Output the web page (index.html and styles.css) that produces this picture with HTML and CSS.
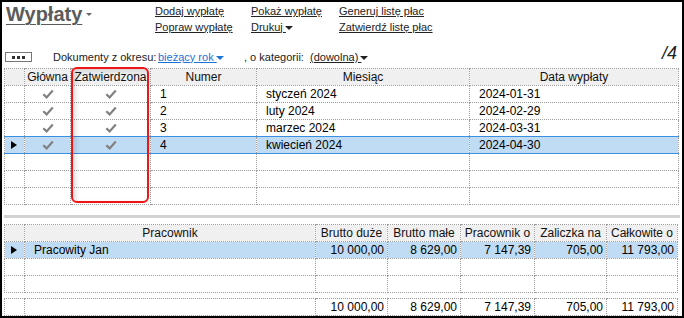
FILE: index.html
```html
<!DOCTYPE html>
<html lang="pl">
  <head>
    <meta charset="utf-8" />
    <meta name="viewport" content="width=device-width, initial-scale=1.0" />
    <title>Wypłaty</title>
    <link rel="stylesheet" href="styles.css">
  </head>

  <body>
    <div class="okno">
      <header class="gora">
        <h1 class="tytul"><span>Wypłaty</span><i class="strzalka szara"></i></h1>
        <nav class="akcje k1">
          <a href="#">Dodaj wypłatę</a>
          <a href="#">Popraw wypłatę</a>
        </nav>
        <nav class="akcje k2">
          <a href="#">Pokaż wypłatę</a>
          <a href="#">Drukuj <i class="strzalka"></i></a>
        </nav>
        <nav class="akcje k3">
          <a href="#">Generuj listę płac</a>
          <a href="#">Zatwierdź listę płac</a>
        </nav>
      </header>

      <div class="filtr">
        <button class="wiecej"><i></i><i></i><i></i></button>
        <span class="etykieta okres">Dokumenty z okresu:</span>
        <a class="wybor niebieski" href="#">bieżący rok <i class="strzalka"></i></a>
        <span class="etykieta kategoria">, o kategorii:</span>
        <a class="wybor" href="#">(dowolna) <i class="strzalka"></i></a>
        <span class="licznik">/4</span>
      </div>

      <!-- lista wypłat -->
      <section class="lista">
        <table class="siatka">
          <colgroup>
            <col style="width: 20px" />
            <col style="width: 46px" />
            <col style="width: 80px" />
            <col style="width: 106px" />
            <col style="width: 213px" />
            <col style="width: 209px" />
          </colgroup>
          <tr>
            <th></th>
            <th>Główna</th>
            <th>Zatwierdzona</th>
            <th>Numer</th>
            <th>Miesiąc</th>
            <th>Data wypłaty</th>
          </tr>
          <tr>
            <td></td>
            <td class="ptak"><svg viewBox="0 0 12 10" width="12" height="10"><path d="M1.3 5.2 L4.6 8.4 L10.8 1.4" /></svg></td>
            <td class="ptak"><svg viewBox="0 0 12 10" width="12" height="10"><path d="M1.3 5.2 L4.6 8.4 L10.8 1.4" /></svg></td>
            <td>1</td>
            <td>styczeń 2024</td>
            <td>2024-01-31</td>
          </tr>
          <tr>
            <td></td>
            <td class="ptak"><svg viewBox="0 0 12 10" width="12" height="10"><path d="M1.3 5.2 L4.6 8.4 L10.8 1.4" /></svg></td>
            <td class="ptak"><svg viewBox="0 0 12 10" width="12" height="10"><path d="M1.3 5.2 L4.6 8.4 L10.8 1.4" /></svg></td>
            <td>2</td>
            <td>luty 2024</td>
            <td>2024-02-29</td>
          </tr>
          <tr>
            <td></td>
            <td class="ptak"><svg viewBox="0 0 12 10" width="12" height="10"><path d="M1.3 5.2 L4.6 8.4 L10.8 1.4" /></svg></td>
            <td class="ptak"><svg viewBox="0 0 12 10" width="12" height="10"><path d="M1.3 5.2 L4.6 8.4 L10.8 1.4" /></svg></td>
            <td>3</td>
            <td>marzec 2024</td>
            <td>2024-03-31</td>
          </tr>
          <tr class="wybrany">
            <td class="znacznik"></td>
            <td class="ptak"><svg viewBox="0 0 12 10" width="12" height="10"><path d="M1.3 5.2 L4.6 8.4 L10.8 1.4" /></svg></td>
            <td class="ptak"><svg viewBox="0 0 12 10" width="12" height="10"><path d="M1.3 5.2 L4.6 8.4 L10.8 1.4" /></svg></td>
            <td>4</td>
            <td>kwiecień 2024</td>
            <td>2024-04-30</td>
          </tr>
          <tr><td></td><td></td><td></td><td></td><td></td><td></td></tr>
          <tr><td></td><td></td><td></td><td></td><td></td><td></td></tr>
          <tr><td></td><td></td><td></td><td></td><td></td><td></td></tr>
        </table>
        <div class="ramka"></div>
      </section>

      <div class="rozdzielacz"></div>

      <!-- pracownicy na liście -->
      <table class="siatka pracownicy">
        <colgroup>
          <col style="width: 20px" />
          <col style="width: 291px" />
          <col style="width: 72px" />
          <col style="width: 73px" />
          <col style="width: 74px" />
          <col style="width: 72px" />
          <col style="width: 71px" />
        </colgroup>
        <tr>
          <th></th>
          <th>Pracownik</th>
          <th>Brutto duże</th>
          <th>Brutto małe</th>
          <th>Pracownik o</th>
          <th>Zaliczka na</th>
          <th>Całkowite o</th>
        </tr>
        <tr class="zaznaczony">
          <td class="znacznik"></td>
          <td>Pracowity Jan</td>
          <td class="kwota">10 000,00</td>
          <td class="kwota">8 629,00</td>
          <td class="kwota">7 147,39</td>
          <td class="kwota">705,00</td>
          <td class="kwota">11 793,00</td>
        </tr>
        <tr><td></td><td></td><td></td><td></td><td></td><td></td><td></td></tr>
        <tr><td></td><td></td><td></td><td></td><td></td><td></td><td></td></tr>
      </table>

      <table class="siatka suma">
        <colgroup>
          <col style="width: 20px" />
          <col style="width: 291px" />
          <col style="width: 72px" />
          <col style="width: 73px" />
          <col style="width: 74px" />
          <col style="width: 72px" />
          <col style="width: 71px" />
        </colgroup>
        <tr>
          <td></td>
          <td></td>
          <td class="kwota">10 000,00</td>
          <td class="kwota">8 629,00</td>
          <td class="kwota">7 147,39</td>
          <td class="kwota">705,00</td>
          <td class="kwota">11 793,00</td>
        </tr>
      </table>
    </div>
  </body>
</html>
```

FILE: styles.css
```css
* {
  box-sizing: border-box;
}

body {
  margin: 0;
  font-family: "Liberation Sans", Arial, sans-serif;
  color: #000;
}

.okno {
  width: 684px;
  height: 318px;
  border: 2px solid #000;
  padding: 0 2px;
  background: #fff;
  overflow: hidden;
}

/* nagłówek z akcjami */
.gora {
  display: flex;
  height: 46px;
  padding-top: 2px;
}

.tytul {
  width: 151px;
  margin: 0;
  padding-left: 2px;
  font-size: 20px;
  line-height: 20px;
  color: #5b5b5b;
}

.tytul span {
  text-decoration: underline;
  text-decoration-thickness: 1px;
  text-underline-offset: 3px;
}

.akcje {
  display: flex;
  flex-direction: column;
  font-size: 11px;
  line-height: 15.5px;
}

.k1 {
  width: 96px;
}

.k2 {
  width: 88px;
}

.akcje a,
.wybor {
  color: #222;
  text-decoration: underline;
}

.strzalka {
  display: inline-block;
  width: 0;
  height: 0;
  margin-left: -1px;
  vertical-align: 1px;
  border-top: 4px solid #222;
  border-left: 4px solid transparent;
  border-right: 4px solid transparent;
}

.strzalka.szara {
  margin-left: 4px;
  vertical-align: 5px;
  border-top-color: #666;
  border-top-width: 3px;
  border-left-width: 3px;
  border-right-width: 3px;
}

/* filtr */
.filtr {
  display: flex;
  align-items: center;
  height: 17px;
  font-size: 11px;
  color: #222;
}

.wiecej {
  display: flex;
  align-items: center;
  justify-content: center;
  gap: 2px;
  width: 27px;
  height: 10px;
  margin: 1px 0 0 1px;
  padding: 0;
  border: 1px solid #777;
  background: #fff;
}

.wiecej i {
  width: 3px;
  height: 3px;
  background: #333;
}

.okres {
  width: 105px;
  margin-left: 21px;
}

.niebieski {
  width: 86px;
  color: #1a73d6;
}

.niebieski .strzalka {
  border-top-color: #1a73d6;
}

.kategoria {
  width: 66px;
}

.licznik {
  margin-left: auto;
  margin-right: 3px;
  font-size: 18px;
  font-style: italic;
  color: #222;
  position: relative;
  top: -3px;
}

/* siatki */
.lista {
  position: relative;
  margin-top: 3px;
}

.siatka {
  width: 674px;
  border-collapse: collapse;
  table-layout: fixed;
  font-size: 12px;
}

.siatka th,
.siatka td {
  height: 17px;
  padding: 0 0 0 9px;
  border: 1px dotted #9c9c9c;
  line-height: 15px;
  white-space: nowrap;
  overflow: hidden;
}

.siatka th {
  padding: 0;
  background: #f0f0f0;
  font-weight: normal;
  text-align: center;
  color: #111;
}

.siatka td.ptak {
  padding: 0;
  text-align: center;
}

.ptak svg {
  display: block;
  margin: 0 auto;
}

.ptak path {
  fill: none;
  stroke: #808080;
  stroke-width: 2.2;
}

.wybrany td {
  background: #bfdcf4;
  border-top: 1px solid #3b8fe0;
  border-bottom: 1px solid #3b8fe0;
}

.zaznaczony td {
  background: #bfdcf4;
}

.siatka td.znacznik {
  padding: 0 0 0 6px;
}

.znacznik::before {
  content: "";
  display: block;
  width: 0;
  height: 0;
  border-left: 6px solid #000;
  border-top: 4.5px solid transparent;
  border-bottom: 4.5px solid transparent;
}

.siatka td.kwota {
  padding: 0 3px 0 0;
  text-align: right;
}

.ramka {
  position: absolute;
  left: 67px;
  top: -1px;
  width: 78px;
  height: 136px;
  border: 2px solid #f01414;
  border-radius: 6px;
  box-shadow: inset 3px 2px 5px rgba(0, 0, 0, 0.12);
}

.rozdzielacz {
  height: 3px;
  margin: 10px 0 6px;
  background: #d2d2d2;
}

.pracownicy {
  width: 673px;
}

.suma {
  width: 673px;
  margin-top: 5px;
}
```
